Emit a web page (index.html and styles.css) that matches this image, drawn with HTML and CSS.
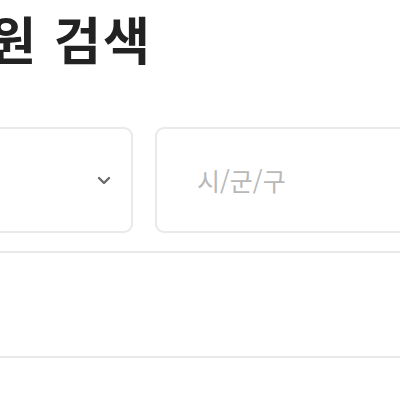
FILE: index.html
```html
<!DOCTYPE html>
<html lang="ko">
<head>
  <meta charset="UTF-8">
  <meta name="viewport" content="width=device-width, initial-scale=1.0">
  <title>병원 검색</title>
  <link rel="stylesheet" href="styles.css">
</head>
<body>
  <div class="page">
    <h1 class="title">병원 검색</h1>

    <div class="region-row">
      <div class="field select-field">
        <span class="select-value">시/도</span>
        <svg class="chevron" width="14" height="9" viewBox="0 0 14 9">
          <path d="M2 2 L7 7 L12 2" fill="none" stroke="#6a6a6a" stroke-width="2.4" stroke-linecap="round" stroke-linejoin="round"/>
        </svg>
      </div>
      <div class="field">
        <input type="text" placeholder="시/군/구">
      </div>
    </div>

    <div class="field wide-field">
      <input type="text" placeholder="">
    </div>
  </div>
</body>
</html>
```

FILE: styles.css
```css
body {
  margin: 0;
  background: #fff;
  font-family: "Noto Sans CJK KR", "Noto Sans", sans-serif;
  overflow: hidden;
}
.page {
  margin-left: -150px;
  width: 800px;
  padding-top: 2px;
}
.title {
  margin: 0 0 53px 90px;
  font-size: 51px;
  font-weight: 700;
  line-height: 72px;
  letter-spacing: 2px;
  color: #222;
}
.region-row {
  display: grid;
  grid-template-columns: 283px 283px;
  gap: 22px;
  margin-bottom: 18px;
}
.field {
  height: 106px;
  box-sizing: border-box;
  border: 2px solid #e9e9e9;
  border-radius: 9px;
  display: flex;
  align-items: center;
  padding: 0 40px;
  background: #fff;
}
.select-field {
  justify-content: space-between;
  padding-right: 20px;
}
.select-value {
  visibility: hidden;
  font-size: 26px;
}
.field input {
  border: none;
  outline: none;
  width: 100%;
  font-family: inherit;
  font-size: 25px;
  color: #333;
  padding: 0;
  background: transparent;
}
.field input::placeholder {
  color: #b8b8b8;
}
.wide-field {
  width: 800px;
  height: 107px;
}
```
